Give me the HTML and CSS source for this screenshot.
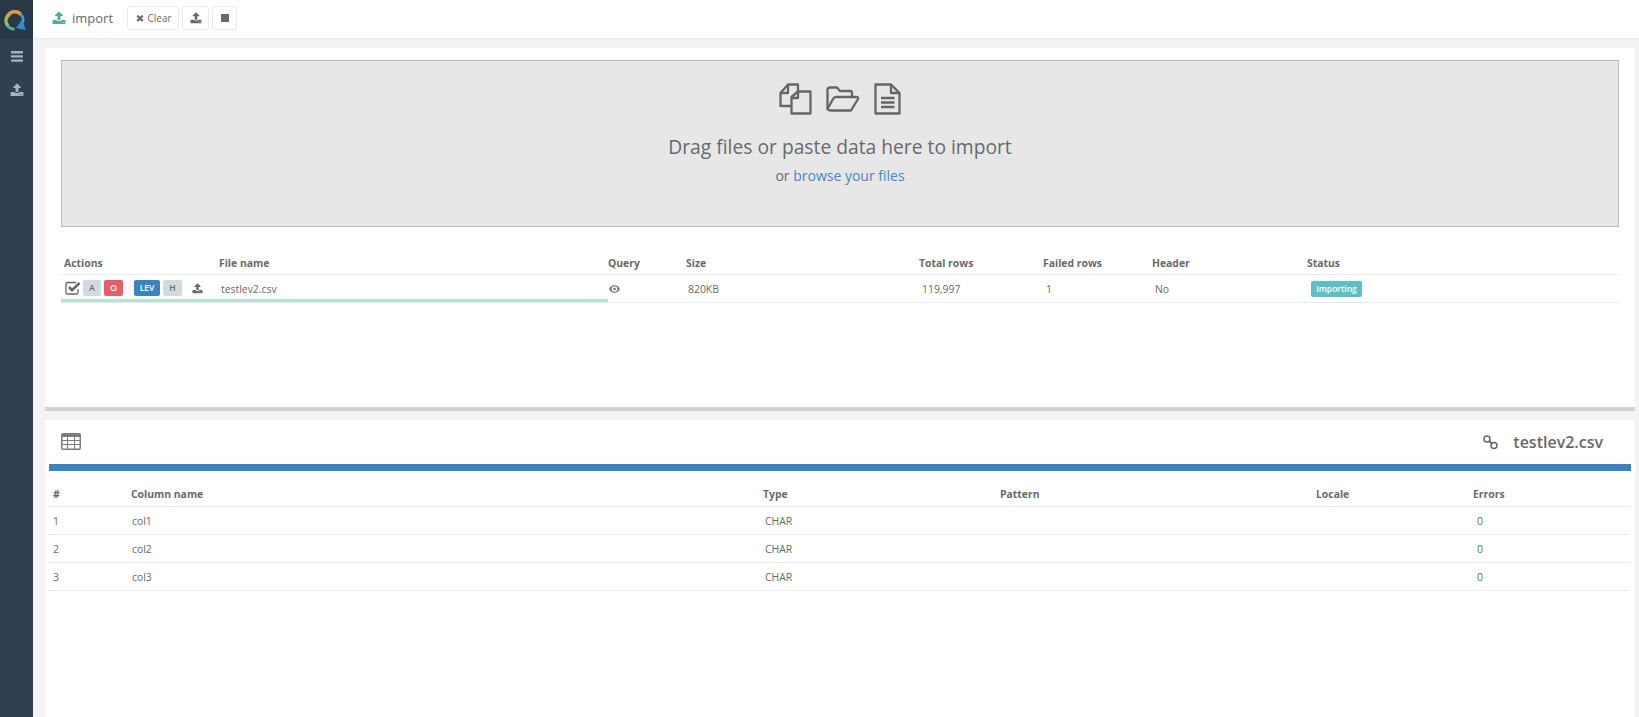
FILE: index.html
```html
<!DOCTYPE html>
<html lang="en">
<head>
  <meta charset="UTF-8">
  <title>import</title>
  <link rel="stylesheet" href="styles.css">
</head>
<body>

<svg class="icon-defs" width="0" height="0">
  <symbol id="i-upload" viewBox="0 0 1792 1792"><path d="M1344 1472q0-26-19-45t-45-19-45 19-19 45 19 45 45 19 45-19 19-45zm256 0q0-26-19-45t-45-19-45 19-19 45 19 45 45 19 45-19 19-45zm128-224v320q0 40-28 68t-68 28h-1472q-40 0-68-28t-28-68v-320q0-40 28-68t68-28h427q21 56 70.5 92t110.5 36h256q61 0 110.5-36t70.5-92h427q40 0 68 28t28 68zm-325-648q-17 40-59 40h-256v448q0 26-19 45t-45 19h-256q-26 0-45-19t-19-45v-448h-256q-42 0-59-40-17-39 14-69l448-448q18-19 45-19t45 19l448 448q31 30 14 69z"/></symbol>
  <symbol id="i-times" viewBox="0 0 1792 1792"><path d="M1490 1322q0 40-28 68l-136 136q-28 28-68 28t-68-28l-294-294-294 294q-28 28-68 28t-68-28l-136-136q-28-28-28-68t28-68l294-294-294-294q-28-28-28-68t28-68l136-136q28-28 68-28t68 28l294 294 294-294q28-28 68-28t68 28l136 136q28 28 28 68t-28 68l-294 294 294 294q28 28 28 68z"/></symbol>
</svg>

<div id="app">
  <div id="sidebar">
    <div id="logo">
      <svg width="22" height="21" viewBox="0 0 22 21" fill="none">
        <path d="M4 16 A8 8 0 0 1 4 5.500" stroke="#9dbb55" stroke-width="3.600"/>
        <path d="M3.500 6.500 A8 8 0 0 1 17 4.500" stroke="#e8963a" stroke-width="3.600"/>
        <path d="M16.500 4 A8 8 0 0 1 18.500 13" stroke="#3f9fd8" stroke-width="2.600"/>
        <path d="M3.500 15.500 A8 8 0 0 0 10.500 19" stroke="#4fb08f" stroke-width="3"/>
        <path d="M12 18 L22 20 L18 10 Z" fill="#2f8fd0"/>
      </svg>
    </div>
    <div class="side-item side-menu">
      <svg width="12" height="11" viewBox="0 0 12 11"><rect width="12" height="2.4" rx=".5"/><rect y="4.2" width="12" height="2.4" rx=".5"/><rect y="8.4" width="12" height="2.4" rx=".5"/></svg>
    </div>
    <div class="side-item">
      <svg width="14" height="14"><use href="#i-upload"/></svg>
    </div>
  </div>

  <div id="main">
    <div id="top-bar">
      <svg class="title-icon" width="14" height="14"><use href="#i-upload"/></svg>
      <span class="page-title">import</span>
      <button class="tool-btn btn-clear"><svg width="10" height="10"><use href="#i-times"/></svg>Clear</button>
      <button class="tool-btn btn-up"><svg width="12" height="12"><use href="#i-upload"/></svg></button>
      <button class="tool-btn btn-stop"><span class="stop-box"></span></button>
    </div>

    <div id="import-panel">
      <div id="dropzone">
        <div class="drop-icons">
          <svg width="33" height="32" viewBox="0 0 33 32" fill="none" stroke="#666" stroke-width="2.300" stroke-linejoin="round">
            <path d="M12 23 H1.500 V10 L9 1.500 H19 V9"/>
            <path d="M9 1.500 V10 H1.500"/>
            <path d="M12.500 30.500 V14 L19 8.500 H31.500 V30.500 Z"/>
            <path d="M19 8.500 V15 H12.500"/>
          </svg>
          <svg width="34" height="26" viewBox="0 0 34 26" fill="none" stroke="#666" stroke-width="2.300" stroke-linejoin="round">
            <path d="M1.500 23 V4 Q1.500 1.500 4 1.500 H11 L14 5 H24 Q26 5 26 7 V10"/>
            <path d="M1.500 23 Q2 24.500 5 24.500 H25 L32 13 Q33 11 30 11 H10 Q8 11 7 13 Z"/>
          </svg>
          <svg width="27" height="32" viewBox="0 0 27 32" fill="none" stroke="#666" stroke-width="2.300" stroke-linejoin="round">
            <path d="M1.500 1.500 H17 L25.500 10 V30.500 H1.500 Z"/>
            <path d="M17 1.500 V10 H25.500"/>
            <path d="M7 15 H20.500 M7 19.500 H20.500 M7 24 H20.500"/>
          </svg>
        </div>
        <div class="drop-text">Drag files or paste data here to import</div>
        <div class="drop-sub">or <a href="#">browse your files</a></div>
      </div>

      <table id="file-table">
        <thead>
          <tr>
            <th class="f-actions">Actions</th>
            <th class="f-name">File name</th>
            <th class="f-query">Query</th>
            <th class="f-size">Size</th>
            <th class="f-total">Total rows</th>
            <th class="f-failed">Failed rows</th>
            <th class="f-header">Header</th>
            <th>Status</th>
          </tr>
        </thead>
        <tbody>
          <tr>
            <td class="action-cell">
              <div class="actions">
                <svg class="check-icon" width="16" height="14" viewBox="0 0 16 14" fill="none" stroke="#666">
                  <path d="M13 8 V11.5 Q13 13 11.5 13 H2.5 Q1 13 1 11.5 V3 Q1 1.500 2.500 1.500 H11" stroke-width="1.300"/>
                  <path d="M4 6 L7 9.200 L14.500 2" stroke-width="2.600"/>
                </svg>
                <span class="tag tag-grey tag-a">A</span>
                <span class="tag tag-red tag-o">O</span>
                <span class="tag tag-blue tag-lev">LEV</span>
                <span class="tag tag-grey tag-h">H</span>
                <svg class="row-upload" width="11" height="11"><use href="#i-upload"/></svg>
              </div>
            </td>
            <td class="name-cell">testlev2.csv</td>
            <td class="query-cell">
              <svg width="11" height="8" viewBox="0 0 11 8"><path d="M5.500 0 C8.500 0 10.300 2.300 11 4 C10.300 5.700 8.500 8 5.500 8 C2.500 8 .700 5.700 0 4 C.700 2.300 2.500 0 5.500 0 Z M5.500 1.300 A2.700 2.700 0 1 0 5.500 6.700 A2.700 2.700 0 1 0 5.500 1.300 Z M5.500 2.600 A1.400 1.400 0 1 1 5.500 5.400 A1.400 1.400 0 1 1 5.500 2.600 Z" fill-rule="evenodd"/></svg>
            </td>
            <td>820KB</td>
            <td class="num-cell">119,997</td>
            <td class="num-cell">1</td>
            <td class="num-cell">No</td>
            <td class="status-cell"><span class="status">Importing</span></td>
          </tr>
        </tbody>
      </table>
    </div>

    <div id="splitter"></div>

    <div id="column-panel">
      <div class="column-head">
        <svg class="table-icon" width="20" height="17" viewBox="0 0 20 17">
          <path fill-rule="evenodd" d="M2 0 H18 Q20 0 20 2 V15 Q20 17 18 17 H2 Q0 17 0 15 V2 Q0 0 2 0 Z M1.500 4 V7 H6 V4 Z M7 4 V7 H13 V4 Z M14 4 V7 H18.500 V4 Z M1.500 8 V11 H6 V8 Z M7 8 V11 H13 V8 Z M14 8 V11 H18.500 V8 Z M1.500 12 V15.500 H6 V12 Z M7 12 V15.500 H13 V12 Z M14 12 V15.500 H18.500 V12 Z"/>
        </svg>
        <svg class="link-icon" width="15" height="15" viewBox="0 0 15 15" fill="none" stroke="#666" stroke-width="1.500">
          <circle cx="4" cy="4" r="3"/>
          <circle cx="11" cy="10.500" r="3"/>
          <path d="M6 6 L9 8.500" stroke-width="2"/>
        </svg>
        <span class="file-title">testlev2.csv</span>
      </div>
      <div class="blue-bar"></div>

      <table id="column-table">
        <thead>
          <tr>
            <th class="c-num">#</th>
            <th class="c-name">Column name</th>
            <th class="c-type">Type</th>
            <th class="c-pattern">Pattern</th>
            <th class="c-locale">Locale</th>
            <th>Errors</th>
          </tr>
        </thead>
        <tbody>
          <tr><td class="pos">1</td><td>col1</td><td class="type">CHAR</td><td></td><td></td><td class="err">0</td></tr>
          <tr><td class="pos">2</td><td>col2</td><td class="type">CHAR</td><td></td><td></td><td class="err">0</td></tr>
          <tr><td class="pos">3</td><td>col3</td><td class="type">CHAR</td><td></td><td></td><td class="err">0</td></tr>
        </tbody>
      </table>
    </div>
  </div>
</div>

</body>
</html>
```

FILE: styles.css
```css
html, body {
  margin: 0;
  height: 100%;
  overflow: hidden;
}
body {
  font-family: "Open Sans", sans-serif;
  font-size: 10.400px;
  color: #676a6c;
  background-color: #f3f3f4;
}
.icon-defs {
  position: absolute;
}
#app {
  display: flex;
  height: 717px;
}

/* sidebar */
#sidebar {
  width: 33px;
  flex-shrink: 0;
  background-color: #2f4050;
}
#logo {
  height: 39px;
  background-color: #293846;
  display: flex;
  align-items: center;
  padding-left: 4px;
  padding-top: 1px;
  box-sizing: border-box;
}
.side-item {
  display: flex;
  justify-content: center;
  fill: #a7b1c2;
  height: 14px;
  margin-top: 21px;
}
.side-menu {
  margin-top: 12px;
  height: 11px;
}

/* top bar */
#main {
  flex: 1;
  min-width: 0;
  display: flex;
  flex-direction: column;
}
#top-bar {
  height: 39px;
  flex-shrink: 0;
  background-color: #fff;
  border-bottom: 1px solid #e7eaec;
  display: flex;
  align-items: center;
  padding-left: 19px;
  padding-bottom: 2px;
  box-sizing: border-box;
}
.title-icon {
  fill: #4fb091;
  margin-right: 6px;
}
.page-title {
  font-size: 13px;
  color: #676a6c;
  margin-right: 14px;
}
.tool-btn {
  height: 24px;
  padding: 0;
  background-color: #fff;
  border: 1px solid #e7eaec;
  border-radius: 3px;
  font-family: "Open Sans", sans-serif;
  font-size: 10px;
  color: #676a6c;
  fill: #676a6c;
  display: flex;
  align-items: center;
  justify-content: center;
  margin-right: 3px;
}
.btn-clear {
  width: 52px;
  gap: 3px;
}
.btn-up {
  width: 27px;
}
.btn-stop {
  width: 25px;
}
.stop-box {
  width: 8px;
  height: 8px;
  background-color: #676a6c;
}

/* upper panel */
#import-panel {
  margin: 9px 4px 0 12px;
  height: 359px;
  flex-shrink: 0;
  box-sizing: border-box;
  padding: 12px 16px 0;
  background-color: #fff;
}
#dropzone {
  height: 167px;
  box-sizing: border-box;
  background-color: #e7e7e7;
  border: 1px solid #bbb;
  text-align: center;
  padding-top: 22px;
}
.drop-icons {
  height: 32px;
  display: flex;
  justify-content: center;
  align-items: center;
  gap: 14px;
}
.drop-text {
  font-size: 19.250px;
  line-height: 27px;
  margin-top: 18px;
  color: #676a6c;
}
.drop-sub {
  font-size: 14px;
  line-height: 19px;
  margin-top: 6px;
}
.drop-sub a {
  color: #4a86c5;
  text-decoration: none;
}

/* tables */
table {
  border-collapse: collapse;
  table-layout: fixed;
  width: 100%;
}
th {
  text-align: left;
  font-weight: 700;
  padding: 0 0 0 3px;
  height: 21px;
  box-sizing: border-box;
  border-bottom: 1px solid #e7eaec;
  vertical-align: middle;
}
td {
  padding: 2px 0 0 5px;
  box-sizing: border-box;
  vertical-align: middle;
}

#file-table {
  margin-top: 26px;
  width: 1558px;
}
#file-table td {
  height: 28px;
  border-bottom: 1px solid #e7eaec;
}
.f-actions { width: 155px; }
.f-name { width: 392px; }
#file-table .f-query { width: 75px; padding-left: 0; }
.f-size { width: 233px; }
.f-total { width: 124px; }
.f-failed { width: 109px; }
.f-header { width: 155px; }

#file-table .action-cell {
  padding: 0;
}
#file-table .name-cell {
  padding-left: 5px;
}
/* progress bar sits under the first two cells */
.action-cell, .name-cell {
  box-shadow: inset 0 -3px 0 #b7e2d3;
}
#file-table .query-cell {
  padding-left: 1px;
  fill: #7d7f81;
}
#file-table .num-cell {
  padding-left: 6px;
}
#file-table .status-cell {
  padding-left: 7px;
}
.actions {
  display: flex;
  align-items: center;
  padding-left: 4px;
  height: 24px;
}
.check-icon {
  flex-shrink: 0;
  margin-right: 2px;
}
.tag {
  height: 16px;
  line-height: 16px;
  border-radius: 2px;
  text-align: center;
  font-size: 8.500px;
  font-weight: 600;
}
.tag-grey {
  background-color: #d1dade;
  color: #676a6c;
}
.tag-red {
  background-color: #e0606e;
  color: #fff;
}
.tag-blue {
  background-color: #3b82c0;
  color: #fff;
}
.tag-a { width: 18px; margin-right: 3px; }
.tag-o { width: 19px; margin-right: 11px; }
.tag-lev { width: 26px; margin-right: 3px; }
.tag-h { width: 19px; margin-right: 10px; }
.row-upload {
  fill: #676a6c;
}
.status {
  display: inline-block;
  background-color: #5bc0c5;
  color: #fff;
  font-size: 8.500px;
  font-weight: 600;
  line-height: 16px;
  width: 51px;
  text-align: center;
  border-radius: 2px;
}

#splitter {
  height: 4px;
  flex-shrink: 0;
  background-color: #d2d2d2;
  margin: 0 4px 0 12px;
}

/* lower panel */
#column-panel {
  flex: 1;
  margin: 9px 4px 0 12px;
  padding: 0 4px;
  background-color: #fff;
}
.column-head {
  height: 44px;
  display: flex;
  align-items: center;
  padding-left: 12px;
  padding-right: 28px;
  box-sizing: border-box;
  fill: #7a7c7e;
}
.table-icon {
  margin-right: auto;
  margin-bottom: 2px;
}
.file-title {
  font-size: 16px;
  font-weight: 600;
  margin-left: 15px;
}
.blue-bar {
  height: 7px;
  background-color: #3b82c0;
}
#column-table {
  margin-top: 13px;
  width: 1580px;
}
#column-table th {
  height: 22px;
  padding-left: 4px;
  padding-bottom: 2px;
}
#column-table td {
  height: 28px;
  border-bottom: 1px solid #e7eaec;
}
.c-num { width: 78px; }
.c-name { width: 632px; }
.c-type { width: 237px; }
.c-pattern { width: 316px; }
.c-locale { width: 157px; }
#column-table .pos {
  padding-left: 4px;
}
#column-table .type {
  padding-left: 6px;
}
#column-table .err {
  padding-left: 8px;
}
```
